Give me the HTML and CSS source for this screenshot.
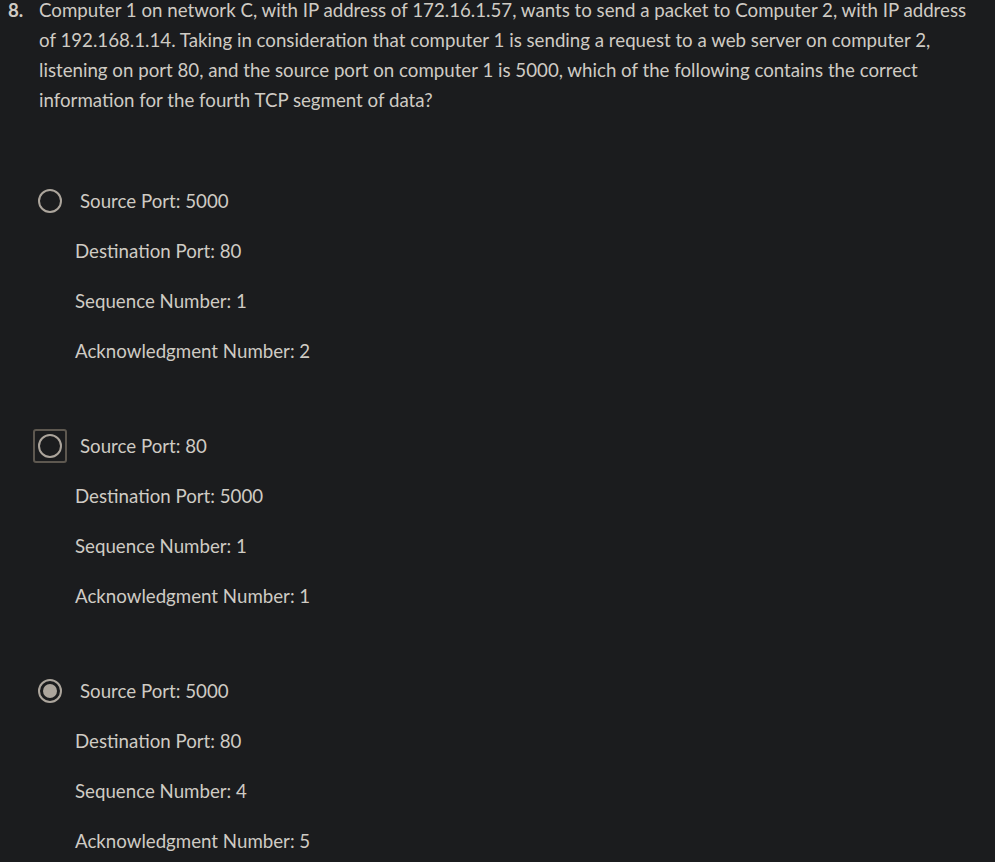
FILE: index.html
```html
<!DOCTYPE html>
<html>
<head>
<meta charset="utf-8">
<link rel="stylesheet" href="styles.css">
</head>
<body>
<div class="question">
  <span class="num">8.</span>
  <p class="text">Computer 1 on network C, with IP address of 172.16.1.57, wants to send a packet to Computer 2, with IP address of 192.168.1.14. Taking in consideration that computer 1 is sending a request to a web server on computer 2, listening on port 80, and the source port on computer 1 is 5000, which of the following contains the correct information for the fourth TCP segment of data?</p>
</div>
<div class="options">
  <div class="option">
    <div class="row">
      <span class="radio-wrap"><span class="radio"></span></span>
      <span class="label">Source Port: 5000</span>
    </div>
    <p class="line">Destination Port: 80</p>
    <p class="line">Sequence Number: 1</p>
    <p class="line">Acknowledgment Number: 2</p>
  </div>
  <div class="option">
    <div class="row">
      <span class="radio-wrap focused"><span class="radio"></span></span>
      <span class="label">Source Port: 80</span>
    </div>
    <p class="line">Destination Port: 5000</p>
    <p class="line">Sequence Number: 1</p>
    <p class="line">Acknowledgment Number: 1</p>
  </div>
  <div class="option">
    <div class="row">
      <span class="radio-wrap"><span class="radio checked"></span></span>
      <span class="label">Source Port: 5000</span>
    </div>
    <p class="line">Destination Port: 80</p>
    <p class="line">Sequence Number: 4</p>
    <p class="line">Acknowledgment Number: 5</p>
  </div>
</div>
</body>
</html>
```
FILE: styles.css
```css
html, body {
  margin: 0;
  padding: 0;
  background: #1b1c1e;
  height: 100%;
}
body {
  font-family: "Lato", "Open Sans", sans-serif;
  font-size: 18.7px;
  color: #cfcbc4;
  overflow: hidden;
}
.question {
  display: flex;
  margin-top: -5px;
  padding-left: 8px;
  padding-right: 20px;
}
.num {
  width: 31px;
  flex: none;
  font-weight: bold;
  line-height: 30px;
}
.text {
  margin: 0;
  line-height: 30px;
}
.options {
  margin-top: 61px;
}
.option {
  margin-bottom: 45px;
}
.row {
  display: flex;
  align-items: center;
  height: 50px;
  padding-left: 33px;
}
.radio-wrap {
  width: 34px;
  height: 34px;
  box-sizing: border-box;
  border: 2px solid transparent;
  border-radius: 3px;
  display: flex;
  align-items: center;
  justify-content: center;
  flex: none;
}
.radio-wrap.focused {
  border-color: #5e5850;
}
.radio {
  width: 24px;
  height: 24px;
  box-sizing: border-box;
  border: 2.5px solid #aca59c;
  border-radius: 50%;
  display: flex;
  align-items: center;
  justify-content: center;
}
.radio.checked::after {
  content: "";
  width: 14px;
  height: 14px;
  border-radius: 50%;
  background: #aca59c;
}
.label {
  margin-left: 13px;
}
.line {
  margin: 0;
  line-height: 50px;
  padding-left: 75px;
}
```
